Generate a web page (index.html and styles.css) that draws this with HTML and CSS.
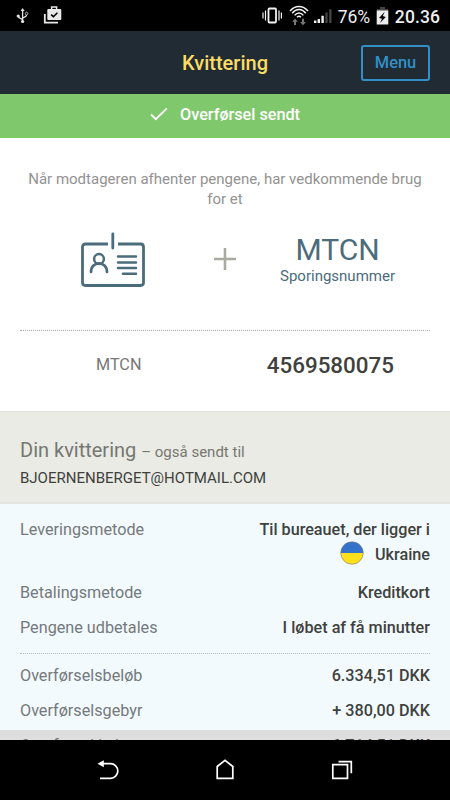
FILE: index.html
```html
<!DOCTYPE html>
<html lang="da">
<head>
    <meta charset="UTF-8">
    <meta name="viewport" content="width=device-width, initial-scale=1.0">
    <title>Kvittering</title>
    <link rel="stylesheet" href="styles.css">
</head>
<body>
    <div class="screen">
        <div class="status-bar">
            <svg class="status-icons" width="80" height="31" viewBox="0 0 80 31">
                <g fill="none" stroke="#e4e4e4" stroke-width="1.3">
                    <path d="M22.6 10v11M18.2 16.3c0 2.3 4.4 1.7 4.4 4M26.6 15c0 2.5-4 1.7-4 3.8"/>
                </g>
                <path d="M22.6 8l-2 3h4z" fill="#e4e4e4"/>
                <circle cx="18.2" cy="16" r="1.6" fill="#e4e4e4"/>
                <circle cx="26.6" cy="13.6" r="1.3" fill="none" stroke="#bbb"/>
                <circle cx="22.6" cy="21.5" r="1.6" fill="#e4e4e4"/>
                <path d="M44.8 14v8.7H58" fill="none" stroke="#e8e8e8" stroke-width="1.8"/>
                <rect x="47.3" y="9" width="14" height="11" rx="1" fill="#e8e8e8"/>
                <path d="M51.6 9.5V7h5v2.5" fill="none" stroke="#e8e8e8" stroke-width="1.5"/>
                <path d="M51.2 14.6l2.2 2.1 4-4" fill="none" stroke="#000" stroke-width="1.6"/>
            </svg>
            <div class="status-right">
                <svg width="72" height="31" viewBox="262 0 72 31">
                    <g fill="none" stroke="#f2f2f2">
                        <rect x="269.5" y="8.5" width="7.5" height="14" rx="1" stroke-width="1.8"/>
                        <path d="M266.5 10.5v10M280 10.5v10M264 12.5v6M282.4 12.5v6" stroke-width="1.2"/>
                        <path d="M291 11c5-6 13-6 18 0M293.2 13.2c4-4.8 9.6-4.8 13.6 0M295.6 15.4c2.6-3.2 6.2-3.2 8.8 0M298 17.2c1.2-1.2 2.8-1.2 4 0" stroke-width="1.5"/>
                    </g>
                    <path d="M296 18.5l2.9 3.2h-1.9V25h-2v-3.3h-1.9zM304 25.2l-2.9-3.2h1.9v-3.3h2V22h1.9z" fill="#777"/>
                    <path d="M315 20.5h2.4V23H315zM318.6 19h2.4v4h-2.4zM322.4 15.8h2.4V23h-2.4z" fill="#f2f2f2"/>
                    <path d="M326.4 12.5h2.2V23h-2.2zM330.2 9.3h2.3V23h-2.3z" fill="#444"/>
                </svg>
                <span class="battery-level">76%</span>
                <svg class="battery" width="13" height="19" viewBox="0 0 13 19">
                    <path d="M1 3h3V1h5v2h3v3H1z" fill="#444"/>
                    <path d="M.7 4.5h11.6v14H.7z" fill="#ededed"/>
                    <path d="M8.7 5.8L3 12l3 .7-2 4.4 5.8-6.2-3-.8z" fill="#000"/>
                </svg>
                <span class="clock">20.36</span>
            </div>
        </div>

        <header class="header">
            <h1>Kvittering</h1>
            <button class="menu-button">Menu</button>
        </header>

        <div class="banner">
            <svg width="18" height="14" viewBox="0 0 18 14">
                <path d="M1 7.5l4.8 4.7L16.8 1.4" fill="none" stroke="#fff" stroke-width="1.8"/>
            </svg>
            <span>Overførsel sendt</span>
        </div>

        <section class="pickup">
            <p class="pickup-text">Når modtageren afhenter pengene, har vedkommende brug for et</p>
            <div class="requirements">
                <svg class="id-card" width="64" height="56" viewBox="0 0 64 56">
                    <g fill="none" stroke="#4b6c7c" stroke-linecap="round">
                        <path d="M27 12H4.5q-3 0-3 3v35.5q0 3 3 3h55q3 0 3-3V15q0-3-3-3H37" stroke-width="2.8" stroke-linecap="butt"/>
                        <path d="M31.8 2v14" stroke-width="2.8"/>
                        <circle cx="18" cy="27" r="4.9" stroke-width="2.5"/>
                        <path d="M10 40c0-11.5 16-11.5 16 0" stroke-width="2.7"/>
                        <path d="M37 24.5h18M37 30.5h18M37 36h18M42 41.7h13" stroke-width="2.5"/>
                    </g>
                </svg>
                <svg class="plus" width="24" height="24" viewBox="0 0 24 24">
                    <path d="M12 1v22M1 12h22" fill="none" stroke="#aaaaa0" stroke-width="2.6"/>
                </svg>
                <div class="mtcn">
                    <div class="mtcn-title">MTCN</div>
                    <div class="mtcn-label">Sporingsnummer</div>
                </div>
            </div>
            <div class="tracking">
                <span class="tracking-label">MTCN</span>
                <span class="tracking-number">4569580075</span>
            </div>
        </section>

        <section class="receipt-header">
            <h2>Din kvittering <small>– også sendt til</small></h2>
            <p>BJOERNENBERGET@HOTMAIL.COM</p>
        </section>

        <section class="details">
            <div class="row row-delivery">
                <span class="label">Leveringsmetode</span>
                <span class="value">
                    Til bureauet, der ligger i
                    <span class="country">
                        <svg width="24" height="24" viewBox="0 0 24 24">
                            <path d="M.7 12a11.3 11.3 0 0 1 22.6 0z" fill="#3472cb"/>
                            <path d="M.7 12a11.3 11.3 0 0 0 22.6 0z" fill="#ffe01b"/>
                            <circle cx="12" cy="12" r="11.2" fill="none" stroke="#777" stroke-width=".6"/>
                        </svg>
                        Ukraine
                    </span>
                </span>
            </div>
            <div class="row">
                <span class="label">Betalingsmetode</span>
                <span class="value">Kreditkort</span>
            </div>
            <div class="row">
                <span class="label">Pengene udbetales</span>
                <span class="value">I løbet af få minutter</span>
            </div>
            <div class="amounts">
                <div class="row">
                    <span class="label">Overførselsbeløb</span>
                    <span class="value">6.334,51 DKK</span>
                </div>
                <div class="row">
                    <span class="label">Overførselsgebyr</span>
                    <span class="value">+ 380,00 DKK</span>
                </div>
            </div>
        </section>

        <section class="total">
            <div class="row">
                <span class="label">Overførsel i alt</span>
                <span class="value">6.714,51 DKK</span>
            </div>
        </section>

        <nav class="nav-bar">
            <svg width="450" height="60" viewBox="0 740 450 60">
                <g fill="none" stroke="#fff" stroke-width="1.7">
                    <path d="M100 778.3h10.5a7.2 7.2 0 0 0 0-14.6H100"/>
                    <path d="M217.2 778.3v-11.8l7.8-6.2 7.8 6.2v11.8z"/>
                    <path d="M332.8 764.6h14.7v13.7h-14.7zM338.5 761.6h12.8v11.7"/>
                </g>
                <path d="M97.5 763.8l6.3-3.5v7z" fill="#fff"/>
            </svg>
        </nav>
    </div>
</body>
</html>
```

FILE: styles.css
```css
* {
    margin: 0;
    padding: 0;
    box-sizing: border-box;
}

body {
    font-family: Roboto, "Liberation Sans", sans-serif;
    font-size: 16.2px;
    line-height: 20px;
    color: #3f413d;
    background: #000;
}

svg {
    display: block;
    flex-shrink: 0;
}

.screen {
    width: 450px;
    height: 800px;
    display: flex;
    flex-direction: column;
    overflow: hidden;
}

.screen > * {
    flex-shrink: 0;
}

.status-bar {
    height: 31px;
    display: flex;
    justify-content: space-between;
    background: #000;
    color: #eee;
}

.status-right {
    display: flex;
    align-items: center;
    padding-right: 10px;
}

.battery-level {
    margin: 2px 0 0 5px;
    width: 33px;
    font-size: 17.5px;
    letter-spacing: -0.1px;
}

.battery {
    margin: 0 6px 0 5px;
}

.clock {
    margin-top: 2px;
    font-size: 17.5px;
    font-weight: 500;
    letter-spacing: 0.1px;
}

.header {
    height: 63px;
    display: grid;
    grid-template-columns: 1fr auto 1fr;
    align-items: center;
    padding: 1px 20px 0;
    background: #202b33;
}

.header h1 {
    grid-column: 2;
    font-size: 20px;
    font-weight: 500;
    color: #fbdc64;
}

.menu-button {
    justify-self: end;
    width: 69px;
    height: 36px;
    padding-bottom: 2px;
    border: 2px solid #338fc6;
    border-radius: 3px;
    background: none;
    color: #338fc6;
    font: 500 16.4px Roboto, sans-serif;
}

.banner {
    height: 44px;
    display: flex;
    justify-content: center;
    align-items: center;
    gap: 12px;
    padding-bottom: 3px;
    background: #80c86c;
    color: #fff;
    font-weight: 500;
}

.banner svg {
    margin-bottom: 2px;
}

.pickup {
    height: 273px;
    padding: 31px 20px 0;
    background: #fff;
}

.pickup-text {
    height: 40px;
    text-align: center;
    font-size: 15px;
    color: #929292;
}

.requirements {
    height: 122px;
    display: grid;
    grid-template-columns: 185px 40px 185px;
    justify-items: center;
    padding-top: 23px;
    border-bottom: 1px dotted #aaa;
}

.plus {
    margin-top: 15px;
}

.mtcn {
    text-align: center;
    color: #4b6c7c;
}

.mtcn-title {
    font-size: 30px;
    line-height: 35px;
}

.mtcn-label {
    font-size: 15px;
    line-height: 18px;
}

.tracking {
    height: 67px;
    display: flex;
    align-items: center;
    justify-content: space-between;
    padding: 0 36px 0 76px;
}

.tracking-label {
    color: #777;
}

.tracking-number {
    font-size: 22.4px;
    font-weight: 500;
}

.receipt-header {
    height: 93px;
    padding: 26px 20px 0;
    border-top: 1px solid #dfe1db;
    border-bottom: 2px solid #e1e4df;
    background: #e9ebe4;
}

.receipt-header h2 {
    font-size: 20px;
    font-weight: 400;
    line-height: 24px;
    color: #777773;
}

.receipt-header small {
    font-size: 15px;
}

.receipt-header p {
    margin-top: 4px;
    font-size: 15px;
}

.details {
    height: 226px;
    padding: 13px 20px 0;
    background: #f2fafe;
}

.row {
    height: 35px;
    display: flex;
    justify-content: space-between;
    line-height: 25px;
}

.row-delivery {
    height: 63px;
}

.label {
    color: #75797b;
}

.value {
    text-align: right;
    font-weight: 500;
}

.country {
    display: flex;
    justify-content: flex-end;
    gap: 11px;
}

.country svg {
    margin-top: -1px;
}

.amounts {
    margin-top: 3px;
    padding-top: 9px;
    border-top: 1px dotted #b4babd;
}

/* Only the top edge of this row shows above the navigation bar */
.total {
    height: 10px;
    padding: 3px 20px 0;
    overflow: hidden;
    background: #dedede;
}

.nav-bar {
    height: 60px;
    background: #000;
}
```
